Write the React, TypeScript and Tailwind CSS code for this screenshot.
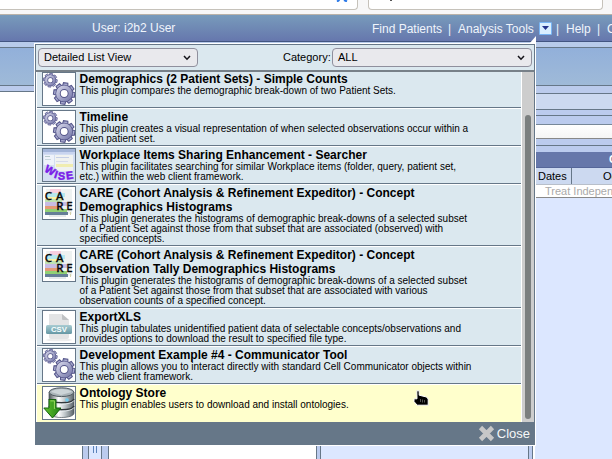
import type { ReactNode } from 'react';

const Gear = ({ x, y, s }: { x: number; y: number; s: number }) => (
  <g transform={`translate(${x} ${y}) scale(${s})`}>
    {[0, 45, 90, 135, 180, 225, 270, 315].map((a) => (
      <path
        key={a}
        d="M-2.8 -5.5 L-2 -9.8 H2 L2.8 -5.5 Z"
        transform={`rotate(${a + 8})`}
        fill="#a9abd0"
        stroke="#55568a"
        strokeWidth="1"
      />
    ))}
    <circle r="5.7" fill="none" stroke="#55568a" strokeWidth="5" />
    <circle r="5.8" fill="none" stroke="url(#metal)" strokeWidth="3.4" />
  </g>
);

const GearsIcon = () => (
  <svg width="32" height="32" viewBox="0 0 32 32">
    <defs>
      <linearGradient id="metal" x1="0" y1="0" x2="1" y2="1">
        <stop offset="0" stopColor="#d0d1e6" />
        <stop offset="1" stopColor="#7c7eae" />
      </linearGradient>
    </defs>
    <Gear x={7.3} y={7.2} s={0.7} />
    <Gear x={21.2} y={20.5} s={1.08} />
  </svg>
);

const WiseIcon = () => (
  <svg width="32" height="32" viewBox="0 0 32 32">
    <rect width="32" height="32" fill="#d3def2" />
    <rect width="32" height="3" fill="#a2b4d8" />
    <rect y="3" width="32" height="2" fill="#c8d4ef" />
    <rect x="1" y="6" width="10" height="10" fill="#eef2fa" />
    <rect x="2" y="7" width="5" height="1" fill="#b5c8ca" />
    <rect x="2" y="10" width="6" height="1" fill="#c7d6dc" />
    <rect x="12" y="6" width="18" height="16" fill="#f0f2f0" />
    <rect x="13" y="8" width="13" height="1" fill="#c5cfe6" />
    <rect x="13" y="15" width="17" height="3" fill="#f0edb0" />
    <rect x="13" y="12" width="12" height="1" fill="#d6dbea" />
    <g fill="#7a1de8" stroke="#7a1de8" strokeWidth=".5" fontFamily="Liberation Sans, sans-serif" fontWeight="700" fontSize="10.8">
      <text transform="translate(.8 22) rotate(30)">W</text>
      <text transform="translate(10.6 28.6) rotate(18)">I</text>
      <text transform="translate(14.8 30.6) rotate(3)">S</text>
      <text transform="translate(23.4 30.6) rotate(-8)">E</text>
    </g>
  </svg>
);

const CareIcon = () => (
  <svg width="32" height="32" viewBox="0 0 32 32">
    <rect x="3" y="2" width="26" height="25" fill="#eef2f1" />
    <rect x="7" y="2" width="11" height="4" fill="#f8cfdf" />
    <rect x="3" y="6" width="19" height="4" fill="#b7e8ee" />
    <rect x="3" y="10" width="17" height="3" fill="#fbf2a8" />
    <rect x="2" y="12" width="17" height="3" fill="#bfe3b3" />
    <rect x="2" y="15" width="22" height="4" fill="#c8bce4" />
    <rect x="2" y="19" width="16" height="3" fill="#e39b77" />
    <rect x="2" y="22" width="22" height="3" fill="#91d075" />
    <rect x="2" y="25" width="23" height="3" fill="#667f98" />
    <path d="M6 29h17" stroke="#ccd4da" />
    <rect x="27" y="25" width="1" height="3" fill="#d6d2a9" />
    <g fill="#090909" stroke="#090909" strokeWidth=".3" fontFamily="Noto Sans, sans-serif" fontWeight="500" fontSize="11.5">
      <text x="1.8" y="13">C</text>
      <text x="13" y="13">A</text>
      <text x="13.2" y="23">R</text>
      <text x="23.2" y="23">E</text>
    </g>
  </svg>
);

const CsvIcon = () => (
  <svg width="32" height="32" viewBox="0 0 32 32">
    <defs>
      <linearGradient id="csv" x2="0" y2="1">
        <stop stopColor="#a9ccd2" />
        <stop offset="1" stopColor="#6597a4" />
      </linearGradient>
    </defs>
    <ellipse cx="16" cy="29" rx="13" ry="1.3" fill="#ededed" />
    <path d="M6 3h13l7 6v17q0 2-2 2H8q-2 0-2-2Z" fill="#e3e4e5" />
    <path d="M19 3l7 6h-6q-1 0-1-1Z" fill="#c0c2c4" />
    <rect x="3" y="14" width="26" height="9" rx="1.5" fill="url(#csv)" />
    <text x="16" y="21" textAnchor="middle" fill="#f8ffff" fontFamily="Liberation Sans, sans-serif" fontWeight="700" fontSize="8" textLength="16" lengthAdjust="spacingAndGlyphs">CSV</text>
  </svg>
);

const StoreIcon = () => (
  <svg width="32" height="32" viewBox="0 0 32 32">
    <defs>
      <linearGradient id="disk">
        <stop stopColor="#4b5357" />
        <stop offset=".38" stopColor="#ffffff" />
        <stop offset=".65" stopColor="#bcc4c7" />
        <stop offset="1" stopColor="#596267" />
      </linearGradient>
      <linearGradient id="arrow">
        <stop stopColor="#63c22c" />
        <stop offset="1" stopColor="#208218" />
      </linearGradient>
    </defs>
    <path d="M6 5v21c0 6 25 6 25 0V5Z" fill="url(#disk)" stroke="#4c565b" strokeWidth=".7" />
    <path d="M6 12c2 5 23 5 25 0M6 19c2 5 23 5 25 0" fill="none" stroke="#30383c" strokeWidth="1.6" />
    <path d="M6 13.4c2 5 23 5 25 0M6 20.4c2 5 23 5 25 0" fill="none" stroke="#eef4f6" strokeWidth=".8" />
    <ellipse cx="18.5" cy="5.2" rx="12.3" ry="4.4" fill="#a9b3b7" stroke="#525c62" />
    <path d="M8 5c3-4 18-4 21 0l-11 3Z" fill="#ccd4d7" />
    <circle cx="24" cy="13" r="1.8" fill="#72cdf0" />
    <path d="M6 12.5h7v8.5h5L9.5 31 .8 21H6Z" fill="url(#arrow)" stroke="#15620e" />
    <path d="M7.4 13.9h4v8" fill="none" stroke="#9add5e" />
  </svg>
);

type Plugin = { icon: ReactNode; title: string[]; text: string[]; active?: boolean };

const plugins: Plugin[] = [
  { icon: <GearsIcon />, title: ['Demographics (2 Patient Sets) - Simple Counts'], text: ['This plugin compares the demographic break-down of two Patient Sets.'] },
  { icon: <GearsIcon />, title: ['Timeline'], text: ['This plugin creates a visual representation of when selected observations occur within a', 'given patient set.'] },
  { icon: <WiseIcon />, title: ['Workplace Items Sharing Enhancement - Searcher'], text: ['This plugin facilitates searching for similar Workplace items (folder, query, patient set,', 'etc.) within the web client framework.'] },
  { icon: <CareIcon />, title: ['CARE (Cohort Analysis & Refinement Expeditor) - Concept', 'Demographics Histograms'], text: ['This plugin generates the histograms of demographic break-downs of a selected subset', 'of a Patient Set against those from that subset that are associated (observed) with', 'specified concepts.'] },
  { icon: <CareIcon />, title: ['CARE (Cohort Analysis & Refinement Expeditor) - Concept', 'Observation Tally Demographics Histograms'], text: ['This plugin generates the histograms of demographic break-downs of a selected subset', 'of a Patient Set against those from that subset that are associated with various', 'observation counts of a specified concept.'] },
  { icon: <CsvIcon />, title: ['ExportXLS'], text: ['This plugin tabulates unidentified patient data of selectable concepts/observations and', 'provides options to download the result to specified file type.'] },
  { icon: <GearsIcon />, title: ['Development Example #4 - Communicator Tool'], text: ['This plugin allows you to interact directly with standard Cell Communicator objects within', 'the web client framework.'] },
  { icon: <StoreIcon />, title: ['Ontology Store'], text: ['This plugin enables users to download and install ontologies.'], active: true },
];

const PluginRow = ({ icon, title, text, active }: Plugin) => (
  <div className={`flex shrink-0 border-t border-b border-t-white pl-[5px] pt-px ${title.length > 1 ? 'h-[62px]' : 'h-[38px]'} ${active ? 'border-b-[#ffffcc] bg-[#ffffcc]' : 'border-b-[#667788] bg-[#dbe8ef]'}`}>
    <div className="size-[34px] shrink-0 border border-[#667788] bg-white">{icon}</div>
    <div className="ml-[3.6px] whitespace-nowrap text-black">
      {title.map((t) => (
        <div key={t} className="text-[12px] leading-[14px] font-bold">{t}</div>
      ))}
      {text.map((t) => (
        <div key={t} className="text-[10px] leading-[10px]">{t}</div>
      ))}
    </div>
  </div>
);

const Select = ({ label, className }: { label: string; className: string }) => (
  <div className={`flex h-[19px] items-center justify-between rounded-[4px] border border-[#8f8f9d] bg-[#e9e9ed] pr-[6px] pl-[5px] text-[11px] leading-[17px] text-black ${className}`}>
    <span>{label}</span>
    <svg width="8" height="6" viewBox="0 0 8 6">
      <path d="M1 1l3 3.2L7 1" fill="none" stroke="#15141a" strokeWidth="1.5" />
    </svg>
  </div>
);

const Page = () => (
  <div className="flex h-full flex-col">
    <div className="flex h-[10px] shrink-0 items-start bg-[#f7f7f7] text-[0px]">
      <div className="flex h-[10px] w-[358px] justify-end rounded-br-[4px] border-r border-b border-[#c6c2ba] bg-white pr-[9px]">
        <svg width="12" height="2" viewBox="0 0 12 2"><path d="M1 1.5L3.5 0M8 0l3 1.5" stroke="#2877e8" strokeWidth="2" /></svg>
      </div>
      <div className="ml-[10px] h-[10px] w-[235px] rounded-b-[4px] border-x border-b border-[#c6c2ba] bg-white pl-[21px]">
        <div className="h-px w-[2px] bg-[#555555]" />
      </div>
    </div>
    <div className="h-[4px] shrink-0 bg-[#f7f7f7]" />
    <div className="flex h-[28px] shrink-0 items-center overflow-hidden border-t border-b border-t-[#b9b2a8] border-b-[#425581] bg-linear-to-b from-[#789bbb] to-[#6677ad] text-[12px] whitespace-nowrap text-[#f0f5fc]">
      <span className="ml-[92px] w-[280px] shrink-0">User: i2b2 User</span>
      <span className="w-[76px] shrink-0 pt-px">Find Patients</span>
      <span className="w-[10px] shrink-0 pt-px">|</span>
      <span className="w-[81px] shrink-0 pt-px">Analysis Tools</span>
      <span className="flex h-[13px] w-[13px] shrink-0 items-center justify-center rounded-[1px] border border-[#78b5f4] bg-[#d9efff]">
        <svg width="7" height="4" viewBox="0 0 7 4"><path d="M0 0h7L3.5 4Z" fill="#23348c" /></svg>
      </span>
      <span className="ml-[4px] w-[10px] shrink-0 pt-px">|</span>
      <span className="w-[31px] shrink-0 pt-px">Help</span>
      <span className="w-[10px] shrink-0 pt-px">|</span>
      <span className="shrink-0 pt-px">Change Password</span>
    </div>
    <div className="h-[6px] shrink-0 border-b border-[#667788] bg-[#b8cbea]" />
    <div className="h-[38px] shrink-0 border-b border-[#667788] bg-linear-to-b from-[#92b0da] to-[#9fbad8]" />
    <div className="flex min-h-0 flex-1">
      <div className="flex w-[528px] shrink-0 flex-col">
        <div className="h-[6px] shrink-0 border-b border-[#667788] bg-[#bbcbec]" />
        <div className="flex flex-1 bg-white pl-[82px]">
          <div className="w-[7px] border-x border-[#667788] bg-[#bbcbee]" />
          <div className="flex w-[13px] justify-center border-r border-[#667788] bg-[#dce7ff] pt-[354px]">
            <div className="h-[7px] w-[4px] border-x border-[#5c83ba]" />
          </div>
          <div className="w-[7px] border-r border-[#667788] bg-[#bbcbee]" />
          <div className="w-[207px] bg-white" />
          <div className="w-[5px] border-x border-[#667788] bg-[#bbcbee]" />
          <div className="flex-1 bg-[#dce7ff]" />
        </div>
      </div>
      <div className="w-[5px] shrink-0 border-x border-[#667788] bg-[#bbcbee]" />
      <div className="flex min-w-0 flex-1 flex-col overflow-hidden pl-[2px] whitespace-nowrap">
        <div className="h-[8px] shrink-0 border-b border-[#667788] bg-[#bbcbec]" />
        <div className="h-[16px] shrink-0 border-b border-[#667788] bg-[#ccd9f0]" />
        <div className="h-[6px] shrink-0 border-b border-[#667788] bg-[#bbcbee]" />
        <div className="h-[9px] shrink-0 border-b border-[#778899] bg-[#bbcbee]" />
        <div className="h-[14px] shrink-0 border-b border-[#888888] bg-linear-to-b from-white to-[#f5f5f5]" />
        <div className="h-[7px] shrink-0 border-b border-[#667788] bg-[#bbcbee]" />
        <div className="h-[6px] shrink-0 bg-[#bbcbee]" />
        <div className="h-[16px] shrink-0 border-b border-[#556699] bg-[#6677aa] pl-[74px] text-[11px] leading-[15px] font-bold text-white">Group 1</div>
        <div className="flex h-[17px] shrink-0 border-b border-[#b8bfca] bg-[#ccd9f0] text-[11px] leading-[17px] text-black">
          <div className="w-[37px] shrink-0 border-r border-[#667788] pl-[3px]">Dates</div>
          <div className="shrink-0 pl-[31px]">Occurs</div>
        </div>
        <div className="h-[13px] shrink-0 border-b border-[#888888] bg-white pl-[10px] text-[11px] leading-[13px] text-[#aaaaaa]">Treat Independently</div>
        <div className="flex-1 bg-[#dce7ff]" />
      </div>
    </div>
  </div>
);

export default function App() {
  return (
    <div className="relative h-[459px] w-[612px] overflow-hidden bg-white font-['Liberation_Sans',Arial,sans-serif]">
      <Page />
      <svg className="absolute top-[36px] left-[529px]" width="7" height="8" viewBox="0 0 7 8"><path d="M7 0v8H0Z" fill="white" /></svg>
      <div className="absolute top-[43px] left-[34px] flex h-[403px] w-[502px] flex-col border border-white bg-[#667788]">
        <div className="flex h-[28px] shrink-0 items-center border-x border-t border-b-2 border-x-[#667788] border-t-[#667788] border-b-[#778088] bg-[#dbe8ef] px-[2px]">
          <Select label="Detailed List View" className="w-[160px] shrink-0" />
          <span className="ml-[85px] w-[49px] shrink-0 text-[11px]">Category:</span>
          <Select label="ALL" className="w-[200px] shrink-0" />
        </div>
        <div className="flex h-[350px] shrink-0 border-x border-[#667788]">
          <div className="flex w-[486px] shrink-0 flex-col justify-end overflow-hidden border-x border-white">
            {plugins.map((p, i) => (
              <PluginRow key={i} {...p} />
            ))}
          </div>
          <div className="flex flex-1 flex-col items-center bg-[#cdcdcd] pt-[43px]">
            <div className="h-[304px] w-[6px] rounded-full bg-[#7b7f7f]" />
          </div>
        </div>
        <div className="flex flex-1 items-center justify-end gap-[2px] pr-[5px] text-[13px] text-[#f5f7f9]">
          <svg width="17" height="17" viewBox="0 0 17 17"><path d="M2.5 2.5l12 12M14.5 2.5l-12 12" stroke="#c7c7c7" strokeWidth="4.6" /></svg>
          <span>Close</span>
        </div>
      </div>
      <svg className="absolute top-[390px] left-[413px]" width="17" height="17" viewBox="0 0 17 17">
        <path d="M3.8 .8h2.4v4.4l7.3 1.8 1.7 2v6.2H4.2L1 11.6V8.8h3Z" fill="black" stroke="white" strokeWidth="1" />
        <path d="M7.5 9v3M9.5 9.5v3M11.5 10v2.5" stroke="#777777" strokeWidth=".7" />
      </svg>
    </div>
  );
}
